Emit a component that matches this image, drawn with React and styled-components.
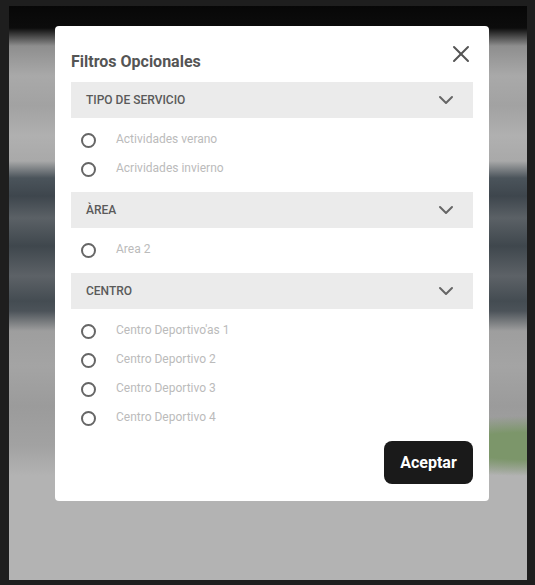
import React from "react"
import styled, { createGlobalStyle } from "styled-components"
import { X, ChevronDown } from "lucide-react"

const GlobalStyle = createGlobalStyle`
  html, body {
    margin: 0;
    padding: 0;
    background: #1e1e1e;
  }
  * {
    box-sizing: border-box;
  }
`

const Frame = styled.div`
  width: 535px;
  height: 585px;
  padding: 6px 8px 5px 9px;
  background: #1e1e1e;
  font-family: Roboto, "Liberation Sans", sans-serif;
`

// blurred page behind the dialog
const Backdrop = styled.div`
  height: 100%;
  padding: 20px 0 0 46px;
  background:
    radial-gradient(ellipse 150px 30px at 100% 440px, rgba(124, 150, 106, 1) 45%, rgba(124, 150, 106, 0)),
    linear-gradient(
      to bottom,
      #070707 0px,
      #0c0c0c 22px,
      #8e8e8e 40px,
      #a9a9a9 70px,
      #a2a2a2 100px,
      #b0b0b0 130px,
      #a9a9a9 155px,
      #4b545b 172px,
      #3e464d 190px,
      #5b6166 212px,
      #3f474d 240px,
      #5d6267 270px,
      #444c52 295px,
      #4c5359 305px,
      #9e9e9e 325px,
      #a4a4a4 360px,
      #9b9b9b 400px,
      #a2a2a2 440px,
      #b3b3b3 470px,
      #b3b3b3 100%
    );
`

const Modal = styled.div`
  width: 434px;
  background: #fff;
  border-radius: 4px;
  padding: 0 16px 17px;
  display: flex;
  flex-direction: column;
`

const TopRow = styled.div`
  height: 56px;
  display: flex;
  justify-content: space-between;
  align-items: flex-start;
`

const Title = styled.h2`
  margin: 26px 0 0;
  font-size: 16px;
  line-height: 20px;
  font-weight: 700;
  color: #555;
`

const Close = styled.button`
  margin: 14px -2px 0 0;
  padding: 0;
  border: 0;
  background: none;
  color: #555;
  display: flex;
  cursor: pointer;
`

const Header = styled.div`
  height: 36px;
  padding: 0 15px;
  background: #ebebeb;
  display: flex;
  align-items: center;
  justify-content: space-between;
  color: #5a5a5a;
  font-size: 12px;
  font-weight: 500;
  text-transform: uppercase;

  svg {
    color: #666;
  }
`

const List = styled.ul`
  list-style: none;
  margin: 0;
  padding: 8px 0;
`

const Row = styled.li`
  height: 29px;
  padding: 0 0 3px 10px;
  display: flex;
  align-items: center;
  gap: 20px;
  font-size: 12px;
  color: #bbb;
`

const Radio = styled.span`
  width: 15px;
  height: 15px;
  border: 2px solid #666;
  border-radius: 50%;
  flex-shrink: 0;
  margin-top: 2px;
`

const Footer = styled.div`
  display: flex;
  justify-content: flex-end;
`

const Button = styled.button`
  width: 89px;
  height: 43px;
  border: 0;
  border-radius: 8px;
  background: #1a1a1a;
  color: #fff;
  font-family: Roboto, "Liberation Sans", sans-serif;
  font-size: 16px;
  font-weight: 700;
  cursor: pointer;
`

const groups = [
  { title: "Tipo de servicio", items: ["Actividades verano", "Acrividades invierno"] },
  { title: "Àrea", items: ["Area 2"] },
  {
    title: "Centro",
    items: ["Centro Deportivo'as 1", "Centro Deportivo 2", "Centro Deportivo 3", "Centro Deportivo 4"],
  },
]

const App = () => {
  return (
    <>
      <GlobalStyle />
      <Frame>
        <Backdrop>
          <Modal>
            <TopRow>
              <Title>Filtros Opcionales</Title>
              <Close aria-label="Cerrar">
                <X size={28} strokeWidth={1.7} />
              </Close>
            </TopRow>
            {groups.map((g) => (
              <section key={g.title}>
                <Header>
                  {g.title}
                  <ChevronDown size={24} strokeWidth={2} />
                </Header>
                <List>
                  {g.items.map((item) => (
                    <Row key={item}>
                      <Radio />
                      {item}
                    </Row>
                  ))}
                </List>
              </section>
            ))}
            <Footer>
              <Button>Aceptar</Button>
            </Footer>
          </Modal>
        </Backdrop>
      </Frame>
    </>
  )
}

export default App
